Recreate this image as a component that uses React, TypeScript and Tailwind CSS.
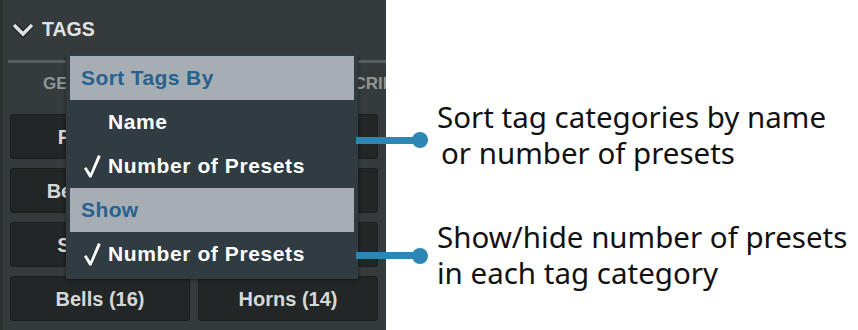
import React from 'react';

const tags = [
    ['Piano (8)', 'Keys (21)'],
    ['Beats (133)', 'Synth (33)'],
    ['Synth (8)', 'Choir (9)'],
    ['Bells (16)', 'Horns (14)'],
];

const Check: React.FC = () => (
    <svg className="w-[17px] h-[23px]" viewBox="0 0 17 23">
        <polygon points="0,13.5 2.3,12 6.4,18.2 14,0 16.8,1.2 7.4,22.5 5.4,22.5" fill="#ffffff" />
    </svg>
);

const MenuHeader: React.FC<{ label: string }> = ({ label }) => (
    <div className="h-[44px] bg-[#a6aeb4] flex items-center pl-[11px]">
        <span className="text-[21px] font-bold tracking-[0.4px] text-[#27618f]">{label}</span>
    </div>
);

const MenuItem: React.FC<{ label: string; checked?: boolean }> = ({ label, checked }) => (
    <div className="h-[44px] flex items-center pl-[14px] gap-[7px]">
        {checked ? <Check /> : <span className="w-[17px]" />}
        <span className="text-[21px] font-bold tracking-[0.6px] text-white">{label}</span>
    </div>
);

const TagsPanel: React.FC = () => (
    <div className="relative w-[386px] h-[330px] shrink-0 overflow-hidden bg-[#353b3c] border-l-[3px] border-[#2b3030] font-['Liberation_Sans',Arial,sans-serif]">
        {/* Header */}
        <div className="mt-[18px] h-[24px] flex items-center">
            <svg className="ml-[8px] w-[24px] h-[18px]" viewBox="0 0 24 18">
                <polyline points="3,4 12,13 21,4" fill="none" stroke="#1d2121" strokeWidth="6" strokeLinejoin="miter" />
                <polyline points="3,4 12,13 21,4" fill="none" stroke="#dde1e2" strokeWidth="3.5" strokeLinejoin="miter" />
            </svg>
            <span className="ml-[7px] text-[19.5px] font-bold text-[#e1e4e4]">TAGS</span>
        </div>

        {/* Divider */}
        <div className="mt-[18px] ml-[5px] h-[3px] bg-[#585e5f]" />

        {/* Column headers */}
        <div className="mt-[8px] h-[20px] flex whitespace-nowrap text-[17px] font-bold text-[#8f9495]">
            <span className="ml-[40px]">GENRE</span>
            <span className="ml-[215px]">DESCRIPTION</span>
        </div>

        {/* Tag buttons */}
        <div className="mt-[23px] ml-[7px] w-[368px] grid grid-cols-2 gap-x-[8px] gap-y-[9px]">
            {tags.flat().map((t, i) => (
                <div
                    key={i}
                    className="h-[45px] rounded-[3px] bg-[#222626] border border-[#1b1e1e] flex items-center justify-center text-[20px] font-bold text-[#d6d8d8] whitespace-nowrap"
                >
                    {t}
                </div>
            ))}
        </div>

        {/* Dropdown menu */}
        <div className="absolute left-[63px] top-[52px] w-[292px] bg-[#313b42] px-[4px] pt-[4px] pb-[3px] shadow-[0_1px_3px_rgba(0,0,0,0.5)]">
            <MenuHeader label="Sort Tags By" />
            <MenuItem label="Name" />
            <MenuItem label="Number of Presets" checked />
            <MenuHeader label="Show" />
            <MenuItem label="Number of Presets" checked />
        </div>
    </div>
);

const App: React.FC = () => {
    return (
        <div className="relative w-[858px] h-[330px] bg-white flex">
            <TagsPanel />

            {/* Callouts */}
            <div className="flex-1 pl-[51px] pt-[99px] flex flex-col gap-[48px] text-[29.5px] leading-[36px] text-[#111] font-['Noto_Sans',sans-serif] whitespace-nowrap">
                <div>
                    <div>Sort tag categories by name</div>
                    <div className="pl-[4px]">or number of presets</div>
                </div>
                <div>
                    <div>Show/hide number of presets</div>
                    <div>in each tag category</div>
                </div>
            </div>

            {/* Connector lines */}
            <div className="absolute left-[356px] top-[137px] w-[60px] h-[7px] bg-[#2e86b4]" />
            <div className="absolute left-[412px] top-[132px] w-[16px] h-[16px] rounded-full bg-[#2e86b4]" />
            <div className="absolute left-[356px] top-[252px] w-[60px] h-[7px] bg-[#2e86b4]" />
            <div className="absolute left-[412px] top-[248px] w-[16px] h-[16px] rounded-full bg-[#2e86b4]" />
        </div>
    );
};

export default App;
